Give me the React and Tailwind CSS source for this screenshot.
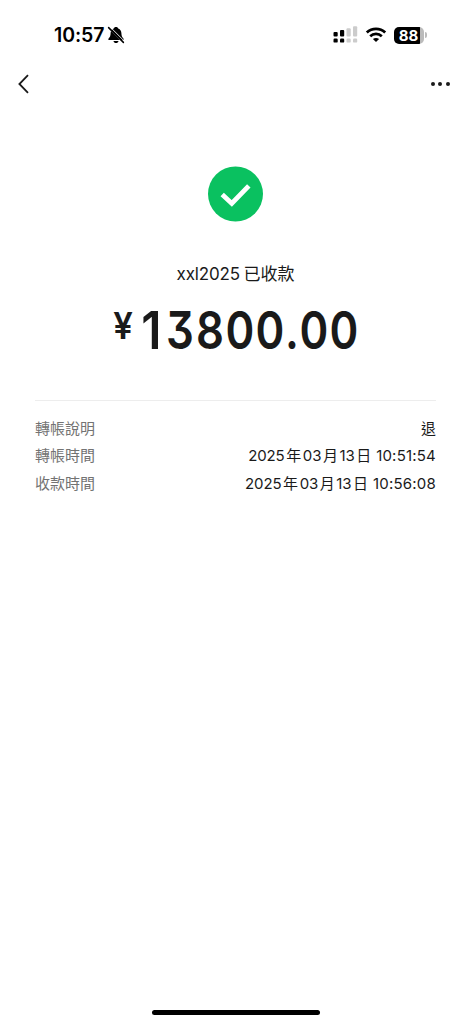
import React from 'react';

const details = [
  { label: '轉帳說明', parts: ['退'], time: '', width: 'w-[15px]' },
  {
    label: '轉帳時間',
    parts: ['2025', '年', '03', '月', '13', '日'],
    time: '10:51:54',
    width: 'w-[123px]',
  },
  {
    label: '收款時間',
    parts: ['2025', '年', '03', '月', '13', '日'],
    time: '10:56:08',
    width: 'w-[123px]',
  },
];

const amount = '13800.00';

const MutedBell = () => (
  <svg className="ml-[3px] h-[18px] w-[18px]" viewBox="0 0 18 18" fill="none">
    <path
      d="M9 1C7.9 1 7 1.6 6.8 2.4C4.6 3.2 3.6 5 3.6 7.3C3.6 10.2 2.8 11.2 1.6 12.4C1 13.1 1.3 14.1 2.3 14.1H15.7C16.7 14.1 17 13.1 16.4 12.4C15.2 11.2 14.4 10.2 14.4 7.3C14.4 5 13.4 3.2 11.2 2.4C11 1.6 10.1 1 9 1ZM6.5 14.9C6.8 16.2 7.7 17 9 17C10.3 17 11.2 16.2 11.5 14.9Z"
      fill="black"
    />
    <path d="M2 2.6L15.6 16.2M3.4 1.2L17 14.8" stroke="white" strokeWidth="0.9" />
    <path d="M1.6 1.6L16.4 16.4" stroke="black" strokeWidth="1.5" strokeLinecap="round" />
  </svg>
);

const Signal = () => (
  <svg className="h-[18px] w-[25px]" viewBox="0 0 25 18">
    <g fill="black">
      <rect x="0.5" y="6" width="4.2" height="4.5" rx="1" />
      <rect x="7" y="4" width="4.2" height="6.5" rx="1" />
      <rect x="0.5" y="12.6" width="4.2" height="4" rx="1.2" />
      <rect x="7" y="12.6" width="4.2" height="4" rx="1.2" />
    </g>
    <g fill="#cccccc">
      <rect x="13.5" y="2.2" width="4.2" height="8.3" rx="1" />
      <rect x="20" y="0.3" width="4.2" height="10.2" rx="1" />
      <rect x="13.5" y="12.6" width="4.2" height="4" rx="1.2" />
      <rect x="20" y="12.6" width="4.2" height="4" rx="1.2" />
    </g>
  </svg>
);

const Wifi = () => (
  <svg className="ml-[7px] h-[16px] w-[22px]" viewBox="0 0 22 16" fill="none">
    <path d="M1.8 5.6C7 0.7 15 0.7 20.2 5.6" stroke="black" strokeWidth="2.8" />
    <path d="M5.2 9.2C8.5 6.1 13.5 6.1 16.8 9.2" stroke="black" strokeWidth="2.7" />
    <path d="M7.9 12.1C9.7 10.5 12.3 10.5 14.1 12.1L11 15.1Z" fill="black" />
  </svg>
);

const StatusBar = () => (
  <div className="flex h-[70px] items-center justify-between pl-[54px] pr-[44px]">
    <div className="flex items-center">
      <span className="w-[50px] whitespace-nowrap pt-[2px] font-['Inter'] text-[19.5px] font-semibold leading-none tracking-[-0.1px] text-black">
        10:57
      </span>
      <MutedBell />
    </div>
    <div className="flex items-center">
      <Signal />
      <Wifi />
      <div className="ml-[7px] flex h-[17px] w-[30px] items-center justify-center rounded-[5px] bg-gradient-to-r from-black from-88% to-[#bbbbbb] to-88% pr-[1px] font-['Inter'] text-[15px] font-bold leading-none text-white">
        88
      </div>
      <div className="ml-[1px] h-[6px] w-[2px] rounded-r-full bg-[#bbbbbb]" />
    </div>
  </div>
);

const NavBar = () => (
  <div className="flex h-7 items-center justify-between pl-[17px] pr-[21px]">
    <svg className="h-[20px] w-[13px]" viewBox="0 0 13 20" fill="none">
      <path d="M11 1.2L2.4 10L11 18.8" stroke="#1a1a1a" strokeWidth="1.8" />
    </svg>
    <div className="flex gap-[3.3px]">
      <span className="size-[4.3px] rounded-full bg-[#1a1a1a]" />
      <span className="size-[4.3px] rounded-full bg-[#1a1a1a]" />
      <span className="size-[4.3px] rounded-full bg-[#1a1a1a]" />
    </div>
  </div>
);

const App = () => {
  return (
    <div className="flex h-screen flex-col bg-white font-['Inter','Noto_Sans_CJK_TC',sans-serif] text-[#1a1a1a]">
      <StatusBar />
      <NavBar />

      <div className="flex flex-col items-center pt-[68px]">
        <svg className="h-[56px] w-[55px]" viewBox="0.5 0 55 56" fill="none">
          <circle cx="28" cy="28" r="27.5" fill="#0ac160" />
          <path d="M14.7 28.5L24.3 37.5L41.3 19.8" stroke="white" strokeWidth="4.8" />
        </svg>
        <div className="mt-[41px] flex h-6 w-[118px] items-center justify-between whitespace-nowrap text-[17px]">
          <span className="tracking-[-0.15px]">xxl2025</span>
          <span>已收款</span>
        </div>
        <div className="mt-[10px] flex h-[66px] w-[246px] justify-between font-semibold">
          <span className="flex w-5 scale-x-[0.94] justify-center text-[37px] leading-[58px]">¥</span>
          <span className="flex text-[52px] font-[590] leading-[68px] [font-feature-settings:'cv09']">
            {[...amount].map((char, i) => (
              <span
                key={i}
                className={`flex scale-x-[0.84] justify-center first:scale-x-[0.92] first:pl-[3px] ${char === '.' ? 'w-[14px]' : 'w-[30px]'}`}
              >
                {char}
              </span>
            ))}
          </span>
        </div>
      </div>

      <div className="mx-[35px] mt-[37px] border-t border-[#ededed] pt-[13.5px]">
        {details.map(({ label, parts, time, width }) => (
          <div key={label} className="flex h-[27.5px] items-center text-[15px] leading-none">
            <span className="mr-auto text-[#737373]">{label}</span>
            <span className={`flex justify-between whitespace-nowrap ${width}`}>
              {parts.map((part, i) => (
                <span key={i} className="tracking-[-0.1px]">{part}</span>
              ))}
            </span>
            {time && <span className="ml-[5px] tracking-[0.2px]">{time}</span>}
          </div>
        ))}
      </div>

      <div className="ml-[152px] mb-[9px] mt-auto h-[5px] w-[168px] rounded-full bg-black" />
    </div>
  );
};

export default App;
